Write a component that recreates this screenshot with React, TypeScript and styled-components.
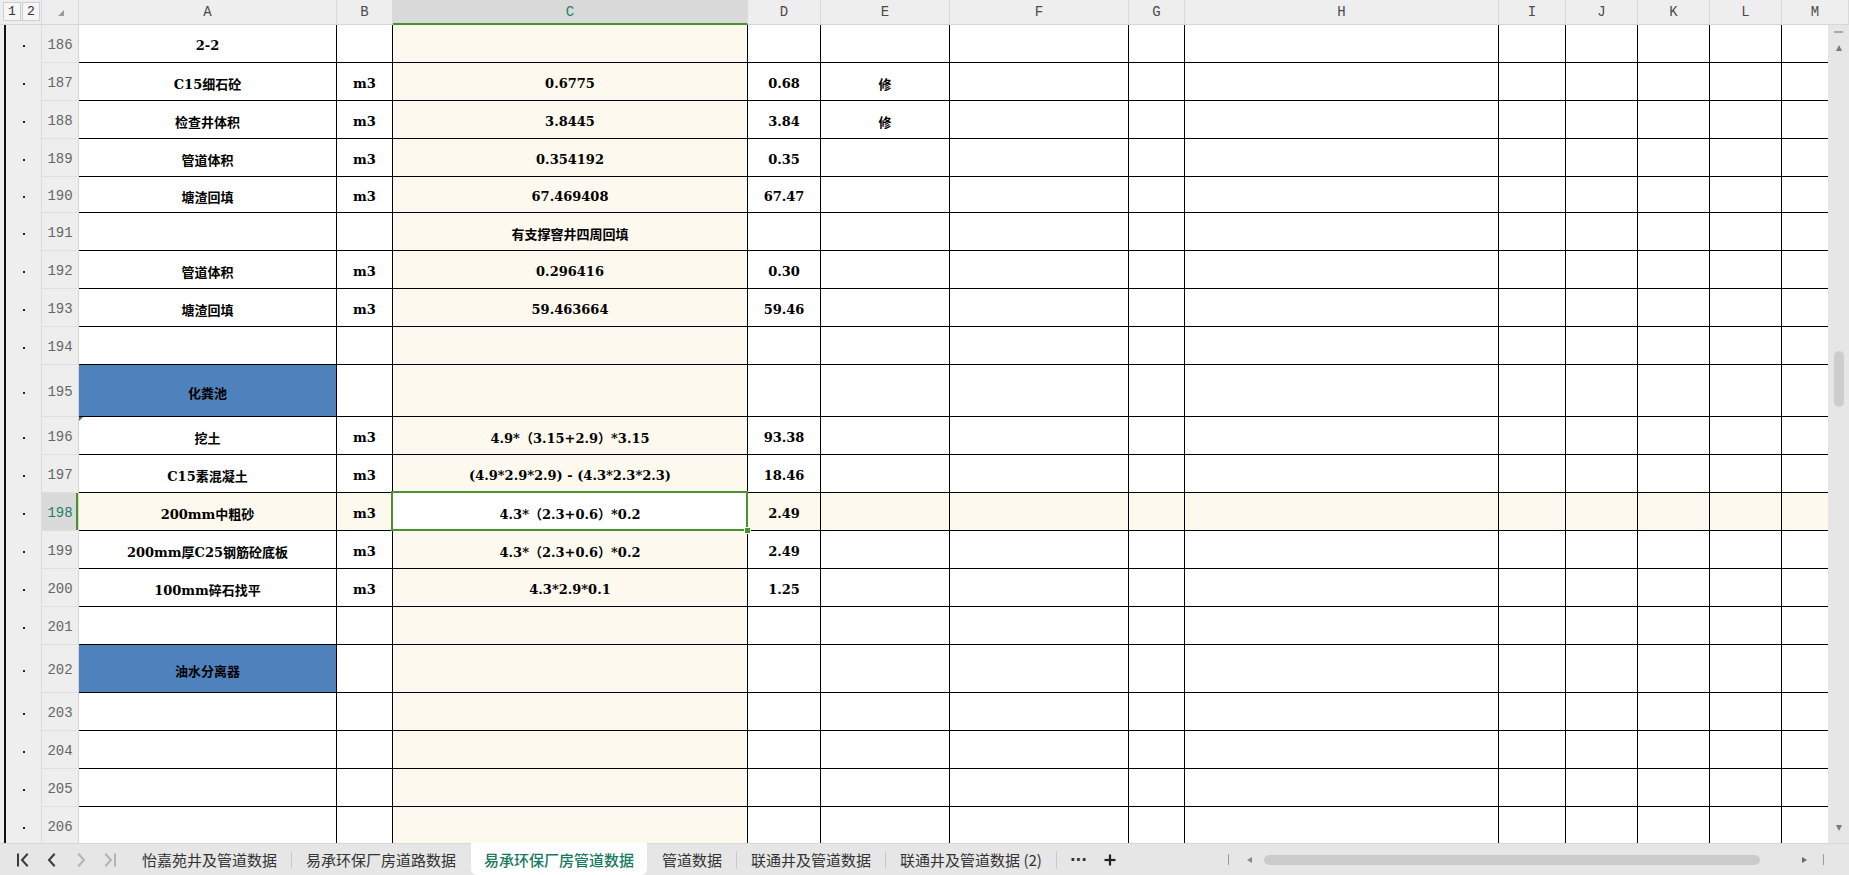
import React from "react";
import styled, { createGlobalStyle, css } from "styled-components";

const GlobalStyle = createGlobalStyle`
  html, body {
    margin: 0;
    padding: 0;
    background: #fff;
    overflow: hidden;
  }
  #root {
    width: 1849px;
    height: 875px;
  }
`;

const CELL_FONT = `"DejaVu Serif", "Noto Sans CJK SC", serif`;
const UI_FONT = `"Noto Sans CJK SC", "Noto Sans", sans-serif`;
const HEAD_FONT = `"Liberation Mono", "DejaVu Sans Mono", monospace`;

const GREEN = "#4a922f";
const CREAM = "#fdf9ef";

type RowData = {
  n: number;
  h: number;
  cells?: Partial<Record<string, string>>;
  blue?: boolean;
  mark?: boolean;
};

const COLUMNS = [
  { key: "A", w: 258 },
  { key: "B", w: 56 },
  { key: "C", w: 355 },
  { key: "D", w: 73 },
  { key: "E", w: 129 },
  { key: "F", w: 179 },
  { key: "G", w: 56 },
  { key: "H", w: 314 },
  { key: "I", w: 67 },
  { key: "J", w: 72 },
  { key: "K", w: 72 },
  { key: "L", w: 72 },
  { key: "M", w: 46 },
];

const ROWS: RowData[] = [
  { n: 186, h: 38, cells: { A: "2-2" } },
  { n: 187, h: 38, cells: { A: "C15细石砼", B: "m3", C: "0.6775", D: "0.68", E: "修" } },
  { n: 188, h: 38, cells: { A: "检查井体积", B: "m3", C: "3.8445", D: "3.84", E: "修" } },
  { n: 189, h: 38, cells: { A: "管道体积", B: "m3", C: "0.354192", D: "0.35" } },
  { n: 190, h: 36, cells: { A: "塘渣回填", B: "m3", C: "67.469408", D: "67.47" } },
  { n: 191, h: 38, cells: { C: "有支撑窨井四周回填" } },
  { n: 192, h: 38, cells: { A: "管道体积", B: "m3", C: "0.296416", D: "0.30" } },
  { n: 193, h: 38, cells: { A: "塘渣回填", B: "m3", C: "59.463664", D: "59.46" } },
  { n: 194, h: 38 },
  { n: 195, h: 52, cells: { A: "化粪池" }, blue: true },
  {
    n: 196,
    h: 38,
    cells: { A: "挖土", B: "m3", C: "4.9*（3.15+2.9）*3.15", D: "93.38" },
    mark: true,
  },
  {
    n: 197,
    h: 38,
    cells: { A: "C15素混凝土", B: "m3", C: "(4.9*2.9*2.9) - (4.3*2.3*2.3)", D: "18.46" },
  },
  { n: 198, h: 38, cells: { A: "200mm中粗砂", B: "m3", C: "4.3*（2.3+0.6）*0.2", D: "2.49" } },
  {
    n: 199,
    h: 38,
    cells: { A: "200mm厚C25钢筋砼底板", B: "m3", C: "4.3*（2.3+0.6）*0.2", D: "2.49" },
  },
  { n: 200, h: 38, cells: { A: "100mm碎石找平", B: "m3", C: "4.3*2.9*0.1", D: "1.25" } },
  { n: 201, h: 38 },
  { n: 202, h: 48, cells: { A: "油水分离器" }, blue: true },
  { n: 203, h: 38 },
  { n: 204, h: 38 },
  { n: 205, h: 38 },
  { n: 206, h: 38 },
];

const ACTIVE_ROW = 198;
const ACTIVE_COL = "C";

const TABS = [
  "怡嘉苑井及管道数据",
  "易承环保厂房道路数据",
  "易承环保厂房管道数据",
  "管道数据",
  "联通井及管道数据",
  "联通井及管道数据 (2)",
];
const ACTIVE_TAB = 2;

/* ---------- layout ---------- */

const Window = styled.div`
  width: 1849px;
  height: 875px;
  display: flex;
  flex-direction: column;
  overflow: hidden;
  background: #fff;
`;

const Sheet = styled.div<{ $cols: string; $rows: string }>`
  flex: none;
  height: 843px;
  overflow: hidden;
  display: grid;
  grid-template-columns: ${(p) => p.$cols};
  grid-template-rows: ${(p) => p.$rows};
  align-content: start;
`;

/* ---------- header row ---------- */

const OutlineCorner = styled.div`
  box-sizing: border-box;
  background: #eeeeee;
  border-bottom: 1px solid #d6d6d6;
  border-right: 1px solid #dcdcdc;
  display: flex;
  align-items: flex-start;
  gap: 1px;
  padding: 2px 0 0 3px;
`;

const LevelButton = styled.div`
  box-sizing: border-box;
  width: 18px;
  height: 19px;
  border: 1px solid #cfcfcf;
  background: #f6f6f6;
  color: #333;
  font: 13px ${HEAD_FONT};
  display: flex;
  align-items: center;
  justify-content: center;
`;

const RowCorner = styled.div`
  box-sizing: border-box;
  background: #eeeeee;
  border-bottom: 1px solid #d6d6d6;
  border-right: 1px solid #d6d6d6;
  display: flex;
  justify-content: flex-end;
  align-items: flex-end;
  padding: 0 14px 8px 0;
`;

const CornerMark = styled.div`
  width: 0;
  height: 0;
  border-left: 6px solid transparent;
  border-bottom: 6px solid #9c9c9c;
`;

const ColHead = styled.div<{ $active?: boolean; $span?: number }>`
  box-sizing: border-box;
  grid-column: span ${(p) => p.$span ?? 1};
  background: ${(p) => (p.$active ? "#d9d9d9" : "#eeeeee")};
  border-right: 1px solid #d9d9d9;
  border-bottom: ${(p) => (p.$active ? `2px solid ${GREEN}` : "1px solid #d6d6d6")};
  color: ${(p) => (p.$active ? "#1f7f6a" : "#4a4a4a")};
  font: 14px ${HEAD_FONT};
  display: flex;
  align-items: center;
  justify-content: center;
  padding-top: ${(p) => (p.$active ? "1px" : "0")};
`;

/* ---------- body ---------- */

const OutlineCell = styled.div`
  box-sizing: border-box;
  position: relative;
  border-right: 1px solid #dcdcdc;
  background: linear-gradient(
      to right,
      transparent 4px,
      #111 4px,
      #111 6px,
      transparent 6px
    ),
    #eeeeee;

  &::after {
    content: "";
    position: absolute;
    left: 23px;
    top: calc(50% + 1px);
    width: 2px;
    height: 2px;
    background: #222;
  }
`;

const RowHead = styled.div<{ $active?: boolean }>`
  box-sizing: border-box;
  background: ${(p) => (p.$active ? "#dadada" : "#eeeeee")};
  border-right: 1px solid #d6d6d6;
  border-bottom: 1px solid #dfdfdf;
  color: ${(p) => (p.$active ? "#1f7f6a" : "#666")};
  font: 14px ${HEAD_FONT};
  display: flex;
  align-items: center;
  justify-content: center;
  padding-top: 3px;
  ${(p) =>
    p.$active &&
    css`
      box-shadow: inset -2px 0 0 ${GREEN};
    `}
`;

const Cell = styled.div<{ $fill?: string; $open?: boolean; $mark?: boolean }>`
  box-sizing: border-box;
  position: relative;
  background: ${(p) => p.$fill ?? "#fff"};
  border-right: ${(p) => (p.$open ? "none" : "1px solid #000")};
  border-bottom: 1px solid #000;
  color: #000;
  font: 700 13px ${CELL_FONT};
  white-space: nowrap;
  overflow: hidden;
  display: flex;
  align-items: center;
  justify-content: center;
  padding-top: 3px;

  ${(p) =>
    p.$mark &&
    css`
      &::before {
        content: "";
        position: absolute;
        left: 0;
        top: 0;
        border-top: 4px solid #2e8b2e;
        border-right: 4px solid transparent;
      }
    `}
`;

const ActiveCell = styled(Cell)`
  overflow: visible;
  z-index: 2;
  background: #fff;

  &::after {
    content: "";
    position: absolute;
    left: -2px;
    top: -2px;
    right: -1px;
    bottom: -1px;
    border: 2px solid ${GREEN};
    pointer-events: none;
  }
`;

const FillHandle = styled.span`
  position: absolute;
  right: -4px;
  bottom: -4px;
  width: 5px;
  height: 5px;
  background: ${GREEN};
  border: 1px solid #fff;
  z-index: 3;
`;

/* ---------- vertical scrollbar ---------- */

const VScroll = styled.div<{ $span: number }>`
  grid-column: 16;
  grid-row: 2 / span ${(p) => p.$span};
  background: #e6e6e6;
  display: flex;
  flex-direction: column;
  align-items: center;
  height: 818px;
`;

const Dash = styled.div`
  width: 9px;
  height: 2px;
  margin-top: 6px;
  background: #aaaaaa;
`;

const UpArrow = styled.div`
  width: 0;
  height: 0;
  margin-top: 12px;
  border-left: 3.5px solid transparent;
  border-right: 3.5px solid transparent;
  border-bottom: 6px solid #7a7a7a;
`;

const DownArrow = styled(UpArrow)`
  margin-top: auto;
  margin-bottom: 12px;
  border-bottom: none;
  border-top: 6px solid #7a7a7a;
`;

const VThumb = styled.div<{ $offset: number }>`
  width: 10px;
  height: 56px;
  margin-top: ${(p) => p.$offset}px;
  border-radius: 5px;
  background: #cdcdcd;
`;

/* ---------- sheet tabs ---------- */

const TabBar = styled.div`
  flex: none;
  height: 32px;
  box-sizing: border-box;
  border-top: 1px solid #d8d8d8;
  background: #e6e6e6;
  display: flex;
  align-items: stretch;
  font-family: ${UI_FONT};
`;

const NavGroup = styled.div`
  width: 128px;
  flex: none;
  display: flex;
  align-items: center;
  gap: 13px;
  padding-left: 15px;
  box-sizing: border-box;
`;

const NavIcon = styled.svg<{ $dim?: boolean }>`
  width: 16px;
  height: 14px;
  flex: none;
  stroke: ${(p) => (p.$dim ? "#b4b4b4" : "#3a3a3a")};
  stroke-width: 2;
  fill: none;
  stroke-linecap: square;
`;

const Tab = styled.div<{ $active?: boolean }>`
  display: flex;
  align-items: center;
  padding: 0 ${(p) => (p.$active ? "13px" : "14px")};
  font-size: 15px;
  font-weight: ${(p) => (p.$active ? 500 : 400)};
  color: ${(p) => (p.$active ? "#177a60" : "#333")};
  background: ${(p) => (p.$active ? "#fff" : "transparent")};
  border-radius: ${(p) => (p.$active ? "0 0 6px 6px" : "0")};
  margin-top: ${(p) => (p.$active ? "-1px" : "0")};
  white-space: nowrap;
`;

const TabSep = styled.div<{ $hidden?: boolean }>`
  width: 1px;
  align-self: center;
  height: 18px;
  background: ${(p) => (p.$hidden ? "transparent" : "#c9c9c9")};
`;

const More = styled.div`
  display: flex;
  align-items: center;
  gap: 17px;
  padding-left: 13px;
  color: #333;
`;

const Dots = styled.span`
  font: 700 15px "DejaVu Sans", sans-serif;
  letter-spacing: 0;
`;

const PlusIcon = styled.svg`
  width: 12px;
  height: 12px;
  stroke: #222;
  stroke-width: 2.2;
`;

const HScroll = styled.div`
  margin-left: auto;
  width: 627px;
  flex: none;
  display: flex;
  align-items: center;
  padding-left: 6px;
  box-sizing: border-box;
`;

const Tick = styled.div<{ $gap?: number }>`
  width: 1px;
  height: 11px;
  background: #9a9a9a;
  margin-left: ${(p) => p.$gap ?? 0}px;
`;

const LeftArrow = styled.div`
  width: 0;
  height: 0;
  margin-left: 18px;
  border-top: 3.5px solid transparent;
  border-bottom: 3.5px solid transparent;
  border-right: 5px solid #8a8a8a;
`;

const RightArrow = styled.div`
  width: 0;
  height: 0;
  margin-left: 42px;
  border-top: 3.5px solid transparent;
  border-bottom: 3.5px solid transparent;
  border-left: 5px solid #6a6a6a;
`;

const HThumb = styled.div`
  width: 496px;
  height: 10px;
  margin-left: 12px;
  border-radius: 5px;
  background: #cbcbcb;
`;

/* ---------- pieces ---------- */

const SheetRow = ({ row }: { row: RowData }) => {
  const activeRow = row.n === ACTIVE_ROW;
  return (
    <>
      <OutlineCell />
      <RowHead $active={activeRow}>{row.n}</RowHead>
      {COLUMNS.map((col) => {
        const text = row.cells?.[col.key];
        if (activeRow && col.key === ACTIVE_COL) {
          return (
            <ActiveCell key={col.key}>
              {text}
              <FillHandle />
            </ActiveCell>
          );
        }
        let fill = "#fff";
        if (activeRow || col.key === ACTIVE_COL) fill = CREAM;
        if (col.key === "A" && row.blue) fill = "#4f81bd";
        return (
          <Cell
            key={col.key}
            $fill={fill}
            $open={col.key === "M"}
            $mark={col.key === "A" && row.mark}
          >
            {text}
          </Cell>
        );
      })}
    </>
  );
};

const App = () => {
  const cols = `42px 37px ${COLUMNS.map((c) => `${c.w}px`).join(" ")} 21px`;
  const rows = `25px ${ROWS.map((r) => `${r.h}px`).join(" ")}`;

  return (
    <Window>
      <GlobalStyle />
      <Sheet $cols={cols} $rows={rows}>
        <VScroll $span={ROWS.length}>
          <Dash />
          <UpArrow />
          <VThumb $offset={300} />
          <DownArrow />
        </VScroll>

        <OutlineCorner>
          <LevelButton>1</LevelButton>
          <LevelButton>2</LevelButton>
        </OutlineCorner>
        <RowCorner>
          <CornerMark />
        </RowCorner>
        {COLUMNS.map((col) => (
          <ColHead
            key={col.key}
            $active={col.key === ACTIVE_COL}
            $span={col.key === "M" ? 2 : 1}
          >
            {col.key}
          </ColHead>
        ))}

        {ROWS.map((row) => (
          <SheetRow key={row.n} row={row} />
        ))}
      </Sheet>

      <TabBar>
        <NavGroup>
          <NavIcon viewBox="0 0 16 14">
            <line x1="3" y1="1.5" x2="3" y2="12.5" />
            <polyline points="12,1.5 7,7 12,12.5" />
          </NavIcon>
          <NavIcon viewBox="0 0 16 14">
            <polyline points="10,1.5 5,7 10,12.5" />
          </NavIcon>
          <NavIcon viewBox="0 0 16 14" $dim>
            <polyline points="6,1.5 11,7 6,12.5" />
          </NavIcon>
          <NavIcon viewBox="0 0 16 14" $dim>
            <polyline points="4,1.5 9,7 4,12.5" />
            <line x1="13" y1="1.5" x2="13" y2="12.5" />
          </NavIcon>
        </NavGroup>

        {TABS.map((name, i) => (
          <React.Fragment key={name}>
            <Tab $active={i === ACTIVE_TAB}>{name}</Tab>
            <TabSep $hidden={i === ACTIVE_TAB || i + 1 === ACTIVE_TAB} />
          </React.Fragment>
        ))}

        <More>
          <Dots>···</Dots>
          <PlusIcon viewBox="0 0 12 12">
            <line x1="6" y1="0.5" x2="6" y2="11.5" />
            <line x1="0.5" y1="6" x2="11.5" y2="6" />
          </PlusIcon>
        </More>

        <HScroll>
          <Tick />
          <LeftArrow />
          <HThumb />
          <RightArrow />
          <Tick $gap={16} />
        </HScroll>
      </TabBar>
    </Window>
  );
};

export default App;
